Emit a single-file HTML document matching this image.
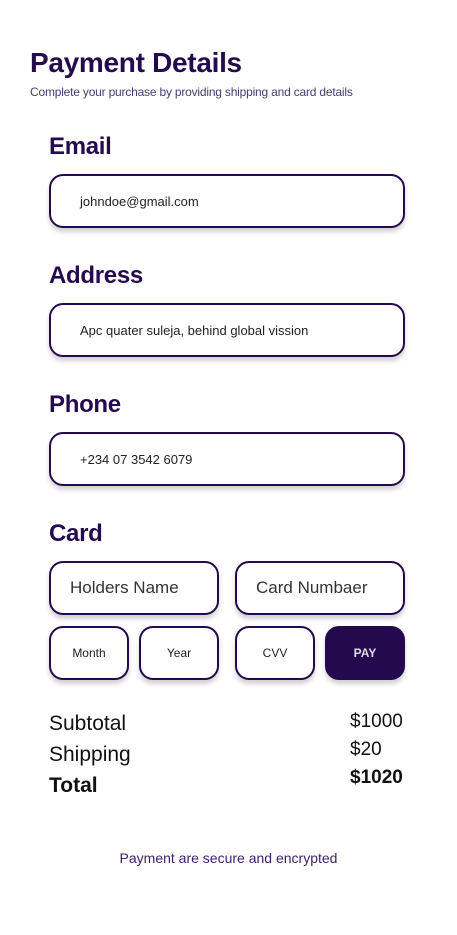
<!DOCTYPE html>
<html><head><style>
body{margin:0;width:457px;height:935px;background:#fff;font-family:"Liberation Sans",sans-serif;position:relative;overflow:hidden;color:#200a4a}
.a{position:absolute;white-space:nowrap}
h1{position:absolute;left:30px;top:47px;margin:0;font-size:28px;font-weight:bold;color:#230b4e;letter-spacing:-0.3px}
.sub{left:30px;top:85px;font-size:12px;color:#4a3a72;letter-spacing:-0.2px}
.lbl{left:49px;font-size:24px;font-weight:bold;color:#230b4e;letter-spacing:-0.3px}
.box{position:absolute;box-sizing:border-box;border:2px solid #25094f;border-radius:14px;background:#fff;box-shadow:0 4px 5px rgba(0,0,0,0.18);display:flex;align-items:center;color:#222;font-size:13px}
.wide{left:49px;width:356px;height:54px;padding-left:29px}
.sm{height:54px;justify-content:center;font-size:12px}
.md{height:54px;padding-left:19px;font-size:17px;color:#333}
.pay{background:#25094f;color:#ddd;font-weight:bold;border-color:#25094f}
.sum{left:49px;font-size:21px;color:#111}
.pr{left:350px;font-size:19px;color:#111}
</style></head><body>
<h1>Payment Details</h1>
<div class="a sub">Complete your purchase by providing shipping and card details</div>

<div class="a lbl" style="top:133px">Email</div>
<div class="box wide" style="top:174px">johndoe@gmail.com</div>

<div class="a lbl" style="top:262px">Address</div>
<div class="box wide" style="top:303px">Apc quater suleja, behind global vission</div>

<div class="a lbl" style="top:391px">Phone</div>
<div class="box wide" style="top:432px">+234 07 3542 6079</div>

<div class="a lbl" style="top:520px">Card</div>
<div class="box md" style="left:49px;top:561px;width:170px">Holders Name</div>
<div class="box md" style="left:235px;top:561px;width:170px">Card Numbaer</div>

<div class="box sm" style="left:49px;top:626px;width:80px">Month</div>
<div class="box sm" style="left:139px;top:626px;width:80px">Year</div>
<div class="box sm" style="left:235px;top:626px;width:80px">CVV</div>
<div class="box sm pay" style="left:325px;top:626px;width:80px">PAY</div>

<div class="a sum" style="top:712px">Subtotal</div>
<div class="a sum" style="top:743px">Shipping</div>
<div class="a sum" style="top:774px;font-weight:bold">Total</div>
<div class="a pr" style="top:711px">$1000</div>
<div class="a pr" style="top:739px">$20</div>
<div class="a pr" style="top:767px;font-weight:bold">$1020</div>

<div class="a" style="left:0;width:457px;text-align:center;top:850px;font-size:14px;color:#3b1f6b">Payment are secure and encrypted</div>
</body></html>
